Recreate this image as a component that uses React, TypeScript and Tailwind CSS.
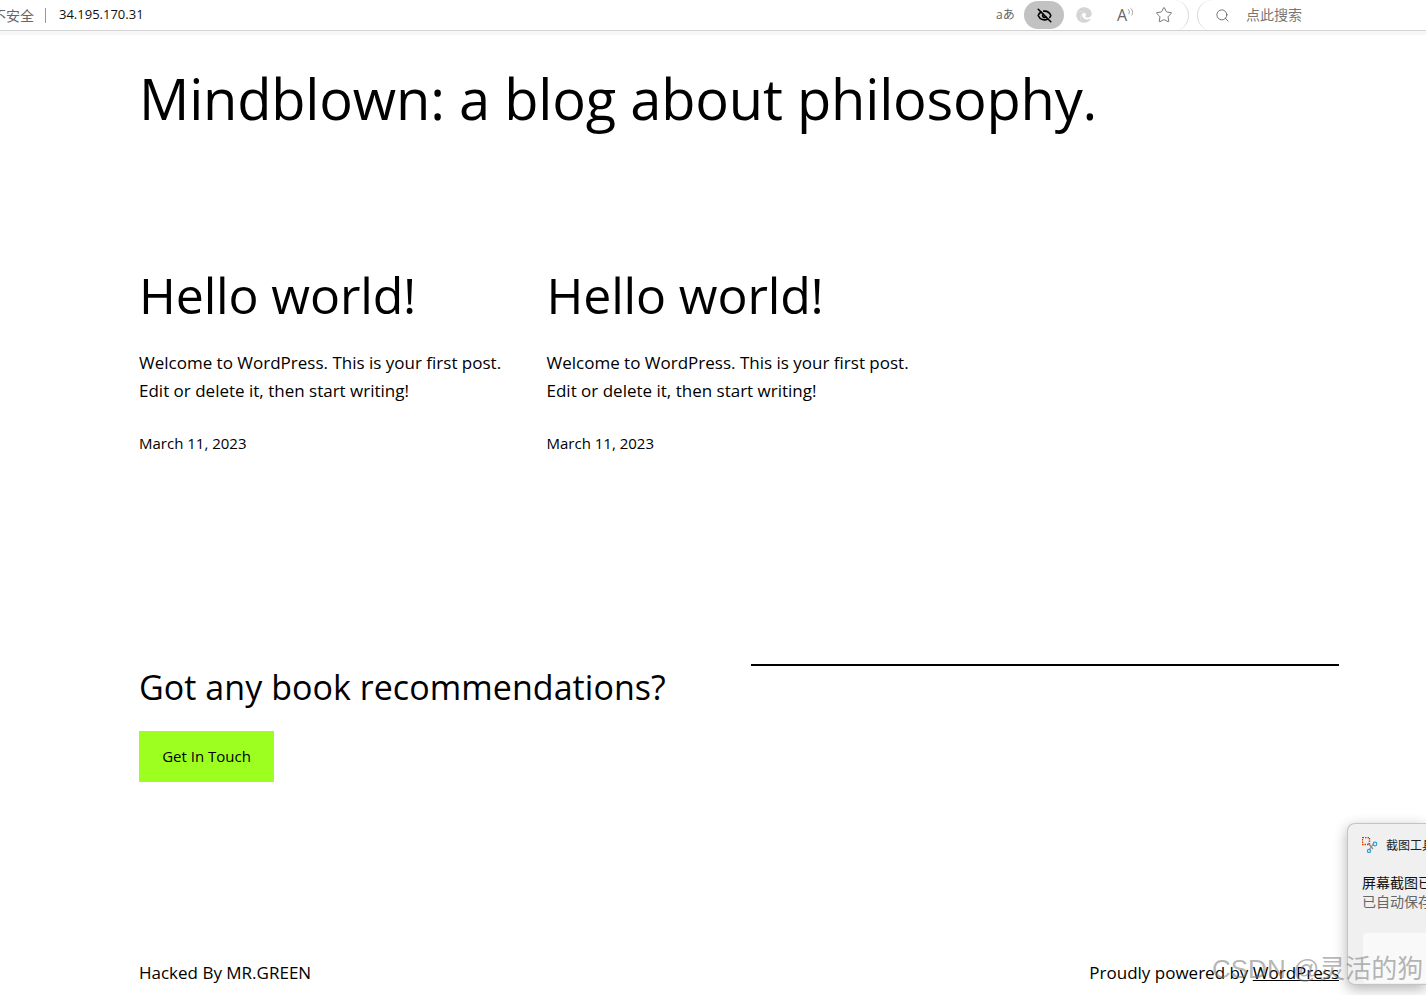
import { EyeOff, Search, Star } from "lucide-react";
import { FaEdge } from "react-icons/fa";

const font = "font-['Open_Sans','Noto_Sans_CJK_SC',sans-serif]";

function BrowserBar() {
  return (
    <div className="h-[35px] border-b-[4px] border-[#f7f7f7] bg-white">
      <div className="flex h-[31px] items-center justify-between border-b border-[#d4d4d4]">
        <div className="flex items-center overflow-hidden">
          <span className="-ml-[8px] w-[53px] text-[14px] text-[#666] font-['Noto_Sans_CJK_SC',sans-serif]">不安全</span>
          <span className="h-[15px] w-px bg-[#999]" />
          <span className="ml-[13px] text-[13px] text-[#111] font-['Open_Sans',sans-serif]">34.195.170.31</span>
        </div>
        <div className="flex h-full items-center">
          <div className="flex h-[31px] items-center rounded-br-[16px] rounded-tr-[16px] border-r border-[#d8d8d8] pr-[15px]">
            <span className="w-[28px] text-[12px] text-[#666] font-['Open_Sans','Noto_Sans_CJK_JP',sans-serif]">aあ</span>
            <span className="flex h-[28px] w-[40px] items-center justify-center rounded-[14px] bg-[#c2c2c2]">
              <EyeOff size={15} strokeWidth={2.6} className="text-black" />
            </span>
            <FaEdge size={16} className="ml-[12px] text-[#d4d4d4]" />
            <span className="ml-[25px] flex w-[17px] items-start text-[16px] leading-none text-[#666] font-['Open_Sans',sans-serif]">
              A
              <svg viewBox="0 0 8 10" className="h-[10px] w-[7px]">
                <path d="M1 1.500c2 1.500 2 4 1 6M4 0.500c3 2 3 6 1.500 8.500" fill="none" stroke="#777" strokeWidth="0.8" />
              </svg>
            </span>
            <Star size={18} strokeWidth={1.2} className="ml-[21px] text-[#666]" />
          </div>
          <div className="ml-[8px] flex h-[31px] w-[229px] items-center rounded-l-[16px] border-l border-[#d8d8d8] pl-[17px]">
            <Search size={15} strokeWidth={1.3} className="text-[#555]" />
            <span className="ml-[16px] -translate-y-px text-[14px] text-[#777] font-['Noto_Sans_CJK_SC',sans-serif]">点此搜索</span>
          </div>
        </div>
      </div>
    </div>
  );
}

function Post() {
  return (
    <article>
      <h2 className="text-[50px] leading-[60px] tracking-[-0.15px] text-black">Hello world!</h2>
      <p className="mt-[24px] text-[17px] leading-[28px] text-black">
        Welcome to WordPress. This is your first post.
        <br />
        Edit or delete it, then start writing!
      </p>
      <p className="mt-[28px] text-[15px] leading-[20px] text-black">March 11, 2023</p>
    </article>
  );
}

function Toast() {
  return (
    <div className="absolute left-[1347px] top-[823px] h-[162px] w-[79px] overflow-hidden rounded-tl-[8px] rounded-bl-[8px] border border-r-0 border-[#c4c4c4] bg-[#f0f0f0] pl-[14px] shadow-[0_4px_14px_rgba(0,0,0,0.3)] font-['Noto_Sans_CJK_SC',sans-serif]">
      <div className="mt-[12px] flex items-center whitespace-nowrap">
        <svg viewBox="0 0 16 16" className="h-[16px] w-[16px] shrink-0">
          <rect x="0.500" y="0.500" width="7" height="7" fill="none" stroke="#d83b01" strokeWidth="1.400" strokeDasharray="1.500 1" />
          <path d="M6 6l5 6M12 6l-5 7" stroke="#8a8a8a" strokeWidth="1.200" />
          <circle cx="13" cy="7" r="1.800" fill="none" stroke="#2b9fd8" strokeWidth="1.200" />
          <circle cx="7" cy="14" r="1.600" fill="none" stroke="#2b9fd8" strokeWidth="1.200" />
        </svg>
        <span className="ml-[8px] text-[12px] text-[#222]">截图工具</span>
      </div>
      <p className="mt-[19px] whitespace-nowrap text-[14px] leading-[19px] text-[#111]">屏幕截图已保存</p>
      <p className="whitespace-nowrap text-[14px] leading-[19px] text-[#666]">已自动保存到</p>
      <div className="mt-[22px] ml-px h-[50px] w-[100px] rounded-[4px] bg-[#f9f9f9]" />
    </div>
  );
}

export default function App() {
  return (
    <div className={`relative h-[995px] w-[1426px] overflow-hidden bg-white ${font}`}>
      <BrowserBar />
      <main className="flex h-[960px] flex-col pl-[139px] pr-[87px]">
        <h1 className="mt-[23px] text-[56px] leading-[80px] tracking-[-0.2px] text-black">Mindblown: a blog about philosophy.</h1>
        <div className="mt-[127px] grid w-[815px] grid-cols-2">
          <Post />
          <Post />
        </div>
        <section className="mt-[211px] flex items-start">
          <div className="w-[612px]">
            <h3 className="text-[34px] leading-[46px] tracking-[0.05px] text-black">Got any book recommendations?</h3>
            <button className="mt-[21px] flex h-[51px] w-[135px] items-center justify-center bg-[#9dff20] text-[15px] text-black">
              Get In Touch
            </button>
          </div>
          <div className="h-[2px] flex-1 bg-black" />
        </section>
        <footer className="mt-auto mb-[10px] flex justify-between text-[17px] leading-[24px] text-black">
          <span>Hacked By MR.GREEN</span>
          <span>
            Proudly powered by <a className="underline">WordPress</a>
          </span>
        </footer>
      </main>
      <Toast />
      <div className="absolute left-[1212px] top-[951px] whitespace-nowrap text-[26px] leading-[36px] text-[rgba(120,120,120,0.55)] font-['Liberation_Sans','Noto_Sans_CJK_SC',sans-serif]">
        CSDN @灵活的狗
      </div>
    </div>
  );
}
